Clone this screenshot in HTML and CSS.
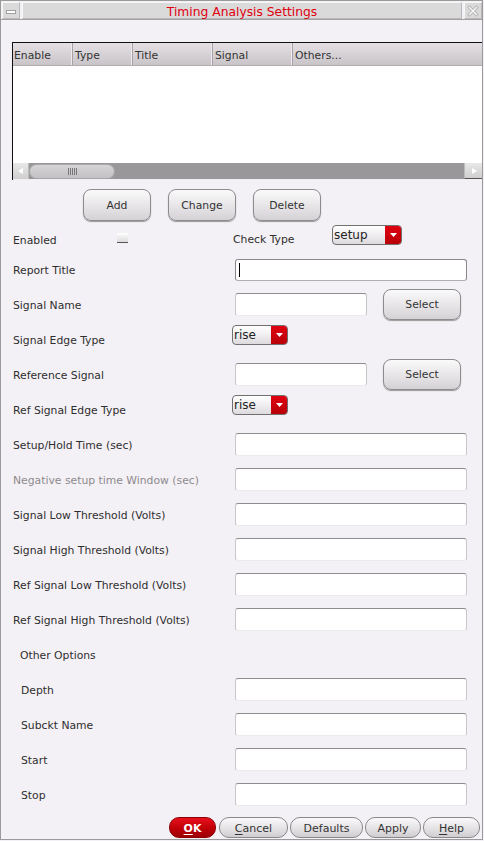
FILE: index.html
```html
<!DOCTYPE html>
<html>
<head>
<meta charset="utf-8">
<link rel="stylesheet" href="styles.css">
</head>
<body>
<div class="window">
  <div class="titlebar">
    <div class="tb-btn"><span class="min-bar"></span></div>
    <div class="tb-title">Timing Analysis Settings</div>
    <div class="tb-btn">
      <svg width="14" height="14" viewBox="0 0 14 14" class="close-ic">
        <path d="M3.5 3.5 L10.5 10.5 M10.5 3.5 L3.5 10.5" stroke="#b4b4b4" stroke-width="3.2" stroke-linecap="square" fill="none"/>
        <path d="M3.5 3.5 L10.5 10.5 M10.5 3.5 L3.5 10.5" stroke="#f8f8f8" stroke-width="1.4" stroke-linecap="square" fill="none"/>
      </svg>
    </div>
  </div>
  <div class="content">
    <div class="table">
      <div class="thead">
        <div class="th c1">Enable</div>
        <div class="th c2">Type</div>
        <div class="th c3">Title</div>
        <div class="th c4">Signal</div>
        <div class="th c5">Others...</div>
      </div>
      <div class="tbody"></div>
      <div class="hscroll">
        <div class="arrow">
          <svg width="8" height="8" viewBox="0 0 8 8"><path d="M6 1 L1 4 L6 7 Z" fill="#fff"/></svg>
        </div>
        <div class="thumb"><span class="grip"></span></div>
        <div class="track"></div>
        <div class="arrow right">
          <svg width="8" height="8" viewBox="0 0 8 8"><path d="M2 1 L7 4 L2 7 Z" fill="#fff"/></svg>
        </div>
      </div>
    </div>

    <div class="btn-row">
      <div class="btn">Add</div>
      <div class="btn">Change</div>
      <div class="btn">Delete</div>
    </div>

    <div class="enabled-row">
      <div class="lbl en-lbl">Enabled</div>
      <div class="check"></div>
      <div class="lbl ct-lbl">Check Type</div>
      <div class="dropdown wide"><span class="dd-text">setup</span><span class="dd-btn"><svg width="7" height="4" viewBox="0 0 7 4"><path d="M0 0 L7 0 L3.5 4 Z" fill="#fff"/></svg></span></div>
    </div>

    <div class="row">
      <div class="lbl">Report Title</div>
      <div class="input full focus"><span class="caret"></span></div>
    </div>
    <div class="row">
      <div class="lbl">Signal Name</div>
      <div class="ctl">
        <div class="input short"></div>
        <div class="btn sel">Select</div>
      </div>
    </div>
    <div class="row">
      <div class="lbl">Signal Edge Type</div>
      <div class="dropdown top"><span class="dd-text">rise</span><span class="dd-btn"><svg width="7" height="4" viewBox="0 0 7 4"><path d="M0 0 L7 0 L3.5 4 Z" fill="#fff"/></svg></span></div>
    </div>
    <div class="row">
      <div class="lbl">Reference Signal</div>
      <div class="ctl">
        <div class="input short"></div>
        <div class="btn sel">Select</div>
      </div>
    </div>
    <div class="row">
      <div class="lbl">Ref Signal Edge Type</div>
      <div class="dropdown top"><span class="dd-text">rise</span><span class="dd-btn"><svg width="7" height="4" viewBox="0 0 7 4"><path d="M0 0 L7 0 L3.5 4 Z" fill="#fff"/></svg></span></div>
    </div>
    <div class="row">
      <div class="lbl">Setup/Hold Time (sec)</div>
      <div class="input full"></div>
    </div>
    <div class="row">
      <div class="lbl disabled">Negative setup time Window (sec)</div>
      <div class="input full"></div>
    </div>
    <div class="row">
      <div class="lbl">Signal Low Threshold (Volts)</div>
      <div class="input full"></div>
    </div>
    <div class="row">
      <div class="lbl">Signal High Threshold (Volts)</div>
      <div class="input full"></div>
    </div>
    <div class="row">
      <div class="lbl">Ref Signal Low Threshold (Volts)</div>
      <div class="input full"></div>
    </div>
    <div class="row">
      <div class="lbl">Ref Signal High Threshold (Volts)</div>
      <div class="input full"></div>
    </div>
    <div class="row">
      <div class="lbl group">Other Options</div>
    </div>
    <div class="row">
      <div class="lbl sub">Depth</div>
      <div class="input full"></div>
    </div>
    <div class="row">
      <div class="lbl sub">Subckt Name</div>
      <div class="input full"></div>
    </div>
    <div class="row">
      <div class="lbl sub">Start</div>
      <div class="input full"></div>
    </div>
    <div class="row">
      <div class="lbl sub">Stop</div>
      <div class="input full"></div>
    </div>

    <div class="footer">
      <div class="pill ok"><u>O</u>K</div>
      <div class="pill w-cancel"><u>C</u>ancel</div>
      <div class="pill w-defaults">Defaults</div>
      <div class="pill w-apply">Apply</div>
      <div class="pill w-help"><u>H</u>elp</div>
    </div>
  </div>
</div>
</body>
</html>
```

FILE: styles.css
```css
* { box-sizing: border-box; }
html, body { margin: 0; padding: 0; background: #f4f1f6; }
body {
  font-family: "DejaVu Sans", "Liberation Sans", sans-serif;
  font-size: 10.8px;
  color: #2e2e2e;
  width: 484px;
  height: 841px;
  overflow: hidden;
}
.window {
  width: 483px;
  height: 840px;
  border-left: 1px solid #9a9a9a;
  border-right: 1px solid #9a9a9a;
  border-bottom: 1px solid #9a9a9a;
  background: #f4f1f6;
  display: flex;
  flex-direction: column;
}
.titlebar {
  height: 20px;
  border-top: 1px solid #9a9a9a;
  border-bottom: 1px solid #a2a2a2;
  display: flex;
  gap: 2px;
  padding: 1px 0 0 1px;
  background: #f4f1f6;
}
.tb-btn {
  width: 18px;
  height: 17px;
  background: #dadada;
  border: 1px solid #f6f6f6;
  border-right-color: #b8b8b8;
  border-bottom-color: #b8b8b8;
  display: flex;
  align-items: center;
  justify-content: center;
  flex: none;
}
.min-bar {
  display: block;
  width: 10px;
  height: 4px;
  background: #fff;
  border: 1px solid #a0a0a0;
  margin-top: 2px;
}
.tb-title {
  flex: 1;
  height: 17px;
  background: #dadada;
  border: 1px solid #f6f6f6;
  border-right-color: #b8b8b8;
  border-bottom-color: #b8b8b8;
  color: #e0000e;
  font-size: 12.3px;
  line-height: 16px;
  padding-top: 1px;
  text-align: center;
}
.content {
  flex: 1;
  padding-left: 11px;
  display: flex;
  flex-direction: column;
}
.table {
  margin-top: 22px;
  width: 470px;
  border-top: 1px solid #111;
  border-left: 1px solid #111;
  display: flex;
  flex-direction: column;
}
.thead {
  height: 23px;
  display: flex;
  background: linear-gradient(#e4e0e4, #c8c4c8);
  border-bottom: 1px solid #b0acb0;
}
.th {
  line-height: 22px;
  padding-top: 2px;
  padding-left: 1px;
  color: #333;
  border-right: 1px solid #a6a2a6;
  box-shadow: inset -1px 0 0 #efeaef;
  flex: none;
}
.c1 { width: 60px; }
.c2 { width: 60px; padding-left: 2px; }
.c3 { width: 80px; padding-left: 2px; }
.c4 { width: 80px; padding-left: 2px; }
.c5 { flex: 1; border-right: none; box-shadow: none; padding-left: 2px; }
.tbody {
  height: 97px;
  background: #fff;
}
.hscroll {
  height: 17px;
  display: flex;
  background: #999799;
  border-bottom: 1px solid #f0f0f0;
}
.arrow {
  width: 16px;
  height: 16px;
  background: linear-gradient(#e8e8e8, #cfcfcf);
  border-right: 1px solid #bbb;
  display: flex;
  align-items: center;
  justify-content: center;
  flex: none;
}
.arrow.right {
  width: 18px;
  border-right: none;
  border-left: 1px solid #bbb;
  border-bottom: 1px solid #555;
}
.thumb {
  width: 86px;
  height: 15px;
  margin-top: 1px;
  border-radius: 8px;
  background: linear-gradient(#d6d4d6, #c2c0c2);
  border: 1px solid #a8a6a8;
  display: flex;
  align-items: center;
  justify-content: center;
  flex: none;
}
.grip {
  width: 9px;
  height: 7px;
  background: repeating-linear-gradient(90deg, #777 0 1px, transparent 1px 2px);
}
.track { flex: 1; }

.btn-row {
  margin-top: 9px;
  margin-left: 71px;
  display: flex;
  gap: 17px;
  height: 32px;
}
.btn {
  width: 68px;
  height: 32px;
  border: 1px solid #8d8b8d;
  border-radius: 8px;
  background: linear-gradient(#fbfafb, #e4e2e4 60%, #d4d2d4);
  box-shadow: 0 1px 1px #9a989a;
  display: flex;
  align-items: center;
  justify-content: center;
  color: #333;
  flex: none;
}

.lbl { line-height: 14px; white-space: nowrap; color: #2e2e2e; padding-left: 1px; padding-top: 2px; }
.lbl.disabled { color: #8c8a8c; }
.lbl.group { padding-left: 8px; }
.lbl.sub { padding-left: 9px; }

.enabled-row {
  height: 31px;
  display: flex;
  align-items: flex-start;
}
.en-lbl { margin-top: 11px; width: 105px; flex: none; padding-left: 1px; }
.check {
  margin-top: 12px;
  width: 11px;
  height: 10px;
  background: linear-gradient(#ffffff, #dcdadc);
  border-bottom: 1px solid #555;
  flex: none;
}
.ct-lbl { margin-top: 10px; margin-left: 104px; width: 100px; flex: none; }
.dropdown {
  height: 20px;
  width: 56px;
  border: 1px solid #707070;
  border-radius: 4px;
  display: flex;
  overflow: hidden;
  background: linear-gradient(#ffffff, #f0eef0 50%, #dcdadc);
  flex: none;
}
.dropdown.wide { width: 70px; margin-top: 4px; }
.dropdown.top { align-self: flex-start; margin-top: 3px; margin-left: -3px; }
.dd-text {
  flex: 1;
  line-height: 18px;
  font-size: 12px;
  padding-left: 1px;
  color: #222;
}
.dd-btn {
  width: 16px;
  background: linear-gradient(#e00010, #b80008);
  display: flex;
  align-items: center;
  justify-content: center;
  flex: none;
}

.row {
  height: 35px;
  display: grid;
  grid-template-columns: 223px 1fr;
  align-items: center;
}
.ctl { display: flex; align-items: center; gap: 16px; }
.input {
  height: 23px;
  background: #fff;
  border: 1px solid #c8c6c8;
  border-top-color: #8e8c8e;
  border-bottom-color: #eceaec;
  border-radius: 3px;
}
.input.full { width: 232px; }
.input.short { width: 132px; }
.input.focus {
  border-color: #8a888a;
  border-bottom-color: #b0aeb0;
  height: 22px;
  position: relative;
}
.caret {
  position: absolute;
  left: 3px;
  top: 3px;
  width: 1px;
  height: 14px;
  background: #000;
}
.btn.sel { width: 78px; height: 31px; }

.footer {
  margin-top: 5px;
  height: 21px;
  display: flex;
  justify-content: flex-end;
  gap: 2px;
  padding-right: 2px;
}
.pill {
  height: 21px;
  border: 1px solid #8a888a;
  border-radius: 10px;
  background: linear-gradient(#fbfafb, #e2e0e2 60%, #cfcdcf);
  display: flex;
  align-items: center;
  justify-content: center;
  color: #333;
  font-size: 11px;
  padding-top: 1px;
  flex: none;
}
.pill u { text-decoration: underline; text-underline-offset: 2px; }
.ok {
  width: 47px;
  background: linear-gradient(#e8101c, #c00008 55%, #9e0006);
  border-color: #8a0004;
  color: #fff;
  font-weight: bold;
  margin-right: 1px;
}
.w-cancel { width: 69px; }
.w-defaults { width: 73px; }
.w-apply { width: 56px; }
.w-help { width: 57px; }
```
